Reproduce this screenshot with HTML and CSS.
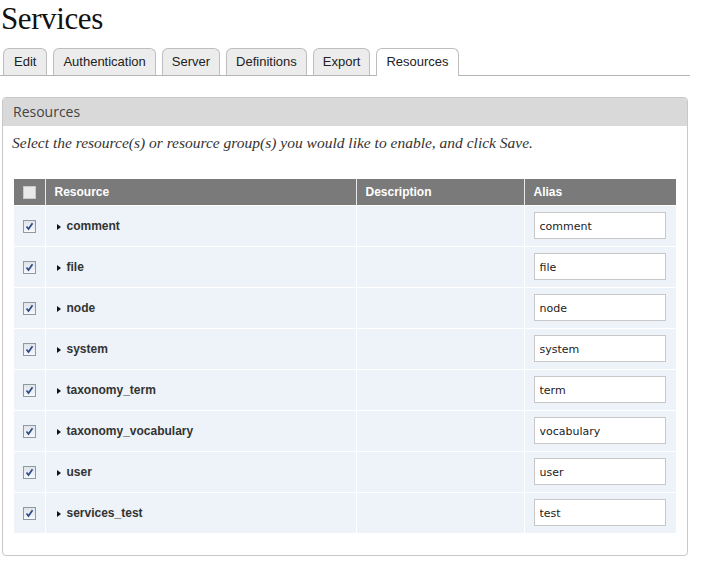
FILE: index.html
```html
<!DOCTYPE html>
<html>
<head>
<meta charset="utf-8">
<title>Services</title>
<link rel="stylesheet" href="styles.css">
</head>
<body>
<div class="page">
  <h1 class="title">Services</h1>
  <ul class="tabs">
    <li class="tab">Edit</li>
    <li class="tab">Authentication</li>
    <li class="tab">Server</li>
    <li class="tab">Definitions</li>
    <li class="tab">Export</li>
    <li class="tab active">Resources</li>
  </ul>
  <div class="panel">
    <div class="panel-head">Resources</div>
    <div class="panel-body">
      <p class="intro">Select the resource(s) or resource group(s) you would like to enable, and click Save.</p>
      <table class="grid">
        <colgroup>
          <col class="c-check"><col class="c-res"><col class="c-desc"><col class="c-alias">
        </colgroup>
        <thead>
          <tr>
            <th class="cell-check"><span class="box head-box"></span></th>
            <th>Resource</th>
            <th>Description</th>
            <th>Alias</th>
          </tr>
        </thead>
        <tbody>
          <tr><td class="cell-check"><span class="box"><svg viewBox="0 0 13 13" width="13" height="13"><path d="M3.5 6.5 L5.5 9 L9.5 3.2" fill="none" stroke="#2b4a8c" stroke-width="1.7"/></svg></span></td><td class="res"><span class="tri"></span>comment</td><td></td><td class="alias"><input class="field" type="text" value="comment"></td></tr>
          <tr><td class="cell-check"><span class="box"><svg viewBox="0 0 13 13" width="13" height="13"><path d="M3.5 6.5 L5.5 9 L9.5 3.2" fill="none" stroke="#2b4a8c" stroke-width="1.7"/></svg></span></td><td class="res"><span class="tri"></span>file</td><td></td><td class="alias"><input class="field" type="text" value="file"></td></tr>
          <tr><td class="cell-check"><span class="box"><svg viewBox="0 0 13 13" width="13" height="13"><path d="M3.5 6.5 L5.5 9 L9.5 3.2" fill="none" stroke="#2b4a8c" stroke-width="1.7"/></svg></span></td><td class="res"><span class="tri"></span>node</td><td></td><td class="alias"><input class="field" type="text" value="node"></td></tr>
          <tr><td class="cell-check"><span class="box"><svg viewBox="0 0 13 13" width="13" height="13"><path d="M3.5 6.5 L5.5 9 L9.5 3.2" fill="none" stroke="#2b4a8c" stroke-width="1.7"/></svg></span></td><td class="res"><span class="tri"></span>system</td><td></td><td class="alias"><input class="field" type="text" value="system"></td></tr>
          <tr><td class="cell-check"><span class="box"><svg viewBox="0 0 13 13" width="13" height="13"><path d="M3.5 6.5 L5.5 9 L9.5 3.2" fill="none" stroke="#2b4a8c" stroke-width="1.7"/></svg></span></td><td class="res"><span class="tri"></span>taxonomy_term</td><td></td><td class="alias"><input class="field" type="text" value="term"></td></tr>
          <tr><td class="cell-check"><span class="box"><svg viewBox="0 0 13 13" width="13" height="13"><path d="M3.5 6.5 L5.5 9 L9.5 3.2" fill="none" stroke="#2b4a8c" stroke-width="1.7"/></svg></span></td><td class="res"><span class="tri"></span>taxonomy_vocabulary</td><td></td><td class="alias"><input class="field" type="text" value="vocabulary"></td></tr>
          <tr><td class="cell-check"><span class="box"><svg viewBox="0 0 13 13" width="13" height="13"><path d="M3.5 6.5 L5.5 9 L9.5 3.2" fill="none" stroke="#2b4a8c" stroke-width="1.7"/></svg></span></td><td class="res"><span class="tri"></span>user</td><td></td><td class="alias"><input class="field" type="text" value="user"></td></tr>
          <tr><td class="cell-check"><span class="box"><svg viewBox="0 0 13 13" width="13" height="13"><path d="M3.5 6.5 L5.5 9 L9.5 3.2" fill="none" stroke="#2b4a8c" stroke-width="1.7"/></svg></span></td><td class="res"><span class="tri"></span>services_test</td><td></td><td class="alias"><input class="field" type="text" value="test"></td></tr>
        </tbody>
      </table>
    </div>
  </div>
</div>
</body>
</html>
```

FILE: styles.css
```css
html, body {
  margin: 0;
  padding: 0;
  background: #ffffff;
}

.page {
  width: 690px;
}

.title {
  margin: 0;
  padding-left: 1px;
  font-family: "Liberation Serif", "Times New Roman", serif;
  font-weight: normal;
  font-size: 31px;
  letter-spacing: -0.4px;
  line-height: 38px;
  color: #111;
}

.tabs {
  list-style: none;
  margin: 10px 0 0 0;
  padding: 0 0 0 3px;
  height: 27px;
  display: flex;
  align-items: flex-start;
  gap: 6px;
  border-bottom: 1px solid #b4b4b4;
}

.tab {
  box-sizing: border-box;
  height: 27px;
  padding: 0 9px;
  border: 1px solid #bdbdbd;
  border-bottom: none;
  border-radius: 6px 6px 0 0;
  background: #ececec;
  font-family: "Liberation Sans", Arial, sans-serif;
  font-size: 13px;
  line-height: 26px;
  color: #222;
}

.tab:first-child {
  padding: 0 10px;
}

.tab.active {
  height: 28px;
  background: #ffffff;
  position: relative;
}

.panel {
  margin: 21px 0 0 2px;
  width: 686px;
  box-sizing: border-box;
  border: 1px solid #c8c8c8;
  border-radius: 4px;
}

.panel-head {
  height: 28px;
  background: #d9d9d9;
  border-radius: 3px 3px 0 0;
  padding-left: 10px;
  font-family: "Open Sans", "DejaVu Sans", sans-serif;
  font-size: 14px;
  line-height: 28px;
  color: #444;
}

.panel-body {
  padding: 7px 11px 22px 11px;
}

.intro {
  margin: 0 0 26px -2px;
  font-family: "Liberation Serif", Georgia, serif;
  font-style: italic;
  font-size: 15.5px;
  line-height: 20px;
  color: #333;
}

.grid {
  width: 662px;
  border-collapse: collapse;
  table-layout: fixed;
  font-family: "Liberation Sans", Arial, sans-serif;
  font-size: 12px;
}

.c-check { width: 31px; }
.c-res { width: 311px; }
.c-desc { width: 168px; }
.c-alias { width: 152px; }

.grid th {
  height: 26px;
  box-sizing: border-box;
  padding: 0 0 0 9px;
  background: #7a7a7a;
  color: #ffffff;
  text-align: left;
  font-weight: bold;
  border-right: 1px solid #e9e9e9;
  border-bottom: 1px solid #ffffff;
}

.grid th:last-child,
.grid td:last-child {
  border-right: none;
}

.grid td {
  height: 41px;
  box-sizing: border-box;
  padding: 0 0 0 9px;
  background: #edf3f9;
  border-right: 1px solid #ffffff;
  border-bottom: 1px solid #ffffff;
  color: #333;
  font-weight: bold;
  vertical-align: middle;
}

.grid tbody tr:last-child td {
  border-bottom: none;
}

.grid .cell-check {
  padding: 0;
  text-align: center;
}

.box {
  display: inline-block;
  width: 13px;
  height: 13px;
  box-sizing: border-box;
  border: 1px solid #8d9aa6;
  background: linear-gradient(#dfe4e9, #f6f8fa);
  vertical-align: middle;
  position: relative;
}

.box svg {
  position: absolute;
  left: -1px;
  top: -1px;
}

.head-box {
  border-color: #c9c9c9;
  background: #e9e9e9;
}

.grid td.res {
  padding-left: 11px;
}

.tri {
  display: inline-block;
  width: 0;
  height: 0;
  border-top: 3.5px solid transparent;
  border-bottom: 3.5px solid transparent;
  border-left: 4px solid #111;
  margin-right: 6px;
  vertical-align: 0;
}

.grid td.alias {
  padding-left: 9px;
}

.field {
  display: block;
  box-sizing: border-box;
  width: 132px;
  height: 27px;
  margin: 0;
  padding: 1px 5px 0 5px;
  border: 1px solid #c8c8c8;
  background: #ffffff;
  font-family: "DejaVu Sans", Verdana, sans-serif;
  font-size: 11px;
  color: #222;
  outline: none;
}
```
